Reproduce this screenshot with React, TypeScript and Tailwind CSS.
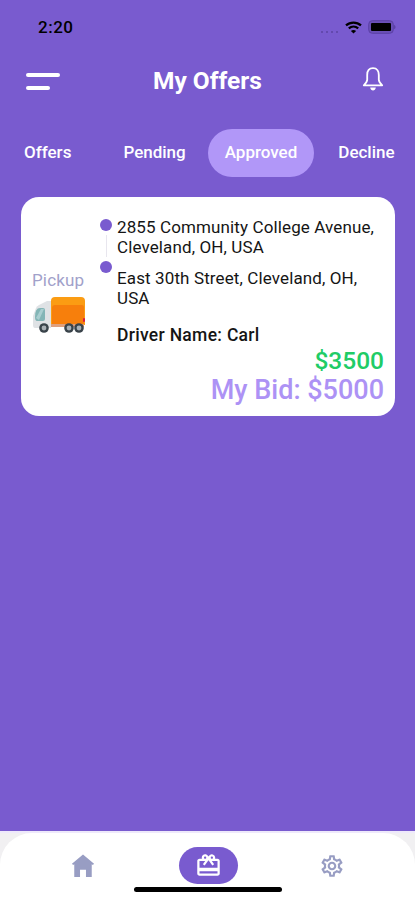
import React, { useState } from 'react';
import { MdOutlineSettings, MdRedeem } from 'react-icons/md';

const tabs = [
  { title: 'Offers', className: 'ml-2 px-4' },
  { title: 'Pending', className: 'ml-[20px] px-4' },
  { title: 'Approved', className: 'ml-[6px] px-[17px]' },
  { title: 'Decline', className: 'ml-[8px] px-4' },
];

const stops = [
  '2855 Community College Avenue, Cleveland, OH, USA',
  'East 30th Street, Cleveland, OH, USA',
];

function StatusBar() {
  return (
    <div className="flex h-[54px] shrink-0 items-center justify-between pl-[38px] pr-[19px] text-black">
      <span className="mt-px text-[17px] font-medium leading-none tracking-[0.5px]">2:20</span>
      <div className="flex items-center">
        <div className="mr-[7px] mt-[9px] flex gap-[3px]">
          {[0, 1, 2, 3].map((dot) => (
            <span key={dot} className="size-[2px] rounded-full bg-[#5d43a3]" />
          ))}
        </div>
        <svg className="h-[13px] w-[17px]" viewBox="0 0 17 13" fill="none" stroke="currentColor" strokeWidth="2.2">
          <path d="M1 4.4C5.2.6 11.8.6 16 4.4" />
          <path d="M3.8 7.4c2.7-2.4 6.7-2.4 9.4 0" />
          <path d="M8.5 12.6 5.9 10c1.5-1.3 3.7-1.3 5.2 0z" fill="currentColor" stroke="none" />
        </svg>
        <svg className="ml-[6px] h-[14px] w-[28px]" viewBox="0 0 28 14">
          <rect x=".7" y=".7" width="24.6" height="12.6" rx="3.6" fill="#6b50b8" stroke="#5b40a6" />
          <rect x="3" y="3" width="20" height="8" rx="1" fill="#000" />
          <path d="M26.3 4.7c1.5.8 1.5 3.8 0 4.6z" fill="#513896" />
        </svg>
      </div>
    </div>
  );
}

function Bell() {
  return (
    <svg className="h-[25px] w-[22px]" viewBox="0 0 22 25" fill="none" stroke="#fff" strokeWidth="1.8" strokeLinejoin="round">
      <path d="M11 1.2C6.8 1.2 5.2 4.5 5.2 8v4.8c0 2-1.4 3.4-3.4 5.5h18.4c-2-2.1-3.4-3.5-3.4-5.5V8c0-3.5-1.6-6.8-5.8-6.8z" />
      <path d="M8.2 20.6c.4 4 5.2 4 5.6 0z" fill="#fff" stroke="none" />
    </svg>
  );
}

function Truck() {
  return (
    <svg className="h-[38px] w-[54px]" viewBox="0 0 54 38">
      <path d="M1 20 4 12q1-2 3-3l8-4h4v27H3q-2 0-2-3z" fill="#dfe2e5" />
      <path d="M3 21q0-9 5-9h3q2 0 2 2v9q0 2-2 2H5q-2 0-2-4z" fill="#83b5b6" />
      <path d="m4 22 5-9h3L7 24z" fill="#a9ced0" />
      <path d="M19 5q0-4 4-4h26q4 0 4 4v24H19z" fill="#fb9c13" />
      <path d="M20 12q0-3 3-3h27q2 0 2 2v16q0 2-2 2H20z" fill="#f77f0c" />
      <path d="M19 28h33v3H19z" fill="#dfa07d" />
      <rect x="51" y="22" width="2" height="4" rx="1" fill="#d91d43" />
      {[12, 37, 47].map((x) => (
        <g key={x}>
          <circle cx={x} cy="32" r="4.8" fill="#39434a" />
          <circle cx={x} cy="32" r="2.4" fill="#a9b0b5" />
        </g>
      ))}
    </svg>
  );
}

function OfferCard() {
  return (
    <section className="ml-[21px] mt-5 flex h-[219px] w-[374px] shrink-0 rounded-[18px] bg-white">
      <div className="ml-[11px] flex w-[55px] flex-col pt-[73px]">
        <span className="text-[17px] leading-5 tracking-[0.15px] text-[#a1a1ca]">Pickup</span>
        <div className="mt-[6px]">
          <Truck />
        </div>
      </div>
      <div className="ml-[13px] flex w-3 flex-col items-center pt-[22px]">
        <span className="size-3 rounded-full bg-[#795bcf]" />
        <span className="my-[4px] h-[22px] w-px bg-[#e8e6ee]" />
        <span className="size-3 rounded-full bg-[#795bcf]" />
      </div>
      <div className="ml-[5px] flex w-[267px] flex-col pt-5 text-[#151515]">
        {stops.map((stop) => (
          <p key={stop} className="mb-[11px] w-[262px] text-[17px] leading-5 tracking-[0.12px]">
            {stop}
          </p>
        ))}
        <p className="mt-[6px] text-[17.5px] font-medium leading-5 tracking-[0.3px]">Driver Name: Carl</p>
        <p className="mt-[2px] text-right text-[24.5px] font-medium leading-[28px] text-[#20cc66]">$3500</p>
        <p className="text-right text-[27px] font-medium leading-[30px] text-[#ad92f5]">My Bid: $5000</p>
      </div>
    </section>
  );
}

function BottomNav() {
  return (
    <div className="mt-auto h-[69px] border-t-2 border-[#eee9fb] bg-[#f1f0f2]">
      <nav className="flex h-[67px] flex-col rounded-t-[32px] bg-white">
        <div className="flex pt-[14px]">
          <button aria-label="Home" className="ml-[71px] flex h-[38px] w-6 items-center justify-center">
            <svg className="h-6 w-[25px]" viewBox="0 0 25 24" fill="#989dc3">
              <path d="M12.5 0 1 9.6l1.2 1.3 1.2-.6V23.5h6V16h6.2v7.5h6V10.3l1.2.6L24 9.6z" />
            </svg>
          </button>
          <button
            aria-label="My offers"
            className="ml-[84px] flex h-[37px] w-[59px] items-center justify-center rounded-full bg-[#795bcf] text-white"
          >
            <MdRedeem size={27} />
          </button>
          <button aria-label="Settings" className="ml-[81px] flex h-[37px] items-center text-[#989dc3]">
            <MdOutlineSettings size={26} />
          </button>
        </div>
        <div className="mx-auto mt-[2px] h-[5px] w-[148px] shrink-0 rounded-full bg-black" />
      </nav>
    </div>
  );
}

export default function App() {
  const [active, setActive] = useState('Approved');

  return (
    <main className="flex h-[900px] w-[415px] flex-col overflow-hidden bg-[#795bcf] font-['Roboto',sans-serif]">
      <StatusBar />
      <header className="flex h-[54px] shrink-0 items-center pl-[26px] pr-[31px]">
        <button aria-label="Menu" className="flex w-[34px] flex-col gap-[9px]">
          <span className="h-[4px] w-[34px] rounded-full bg-white" />
          <span className="h-[4px] w-6 rounded-full bg-white" />
        </button>
        <h1 className="ml-[93px] text-[24.5px] font-bold leading-none text-white">My Offers</h1>
        <button aria-label="Notifications" className="ml-auto -mt-[3px]">
          <Bell />
        </button>
      </header>

      {/* Offer status tabs */}
      <div className="mt-[21px] flex h-12 shrink-0 text-white">
        {tabs.map((tab) => (
          <button
            key={tab.title}
            onClick={() => setActive(tab.title)}
            className={`shrink-0 rounded-full text-[17px] font-medium ${tab.className} ${
              active === tab.title ? 'bg-[#b197f8]' : ''
            }`}
          >
            {tab.title}
          </button>
        ))}
      </div>

      <OfferCard />
      <BottomNav />
    </main>
  );
}
